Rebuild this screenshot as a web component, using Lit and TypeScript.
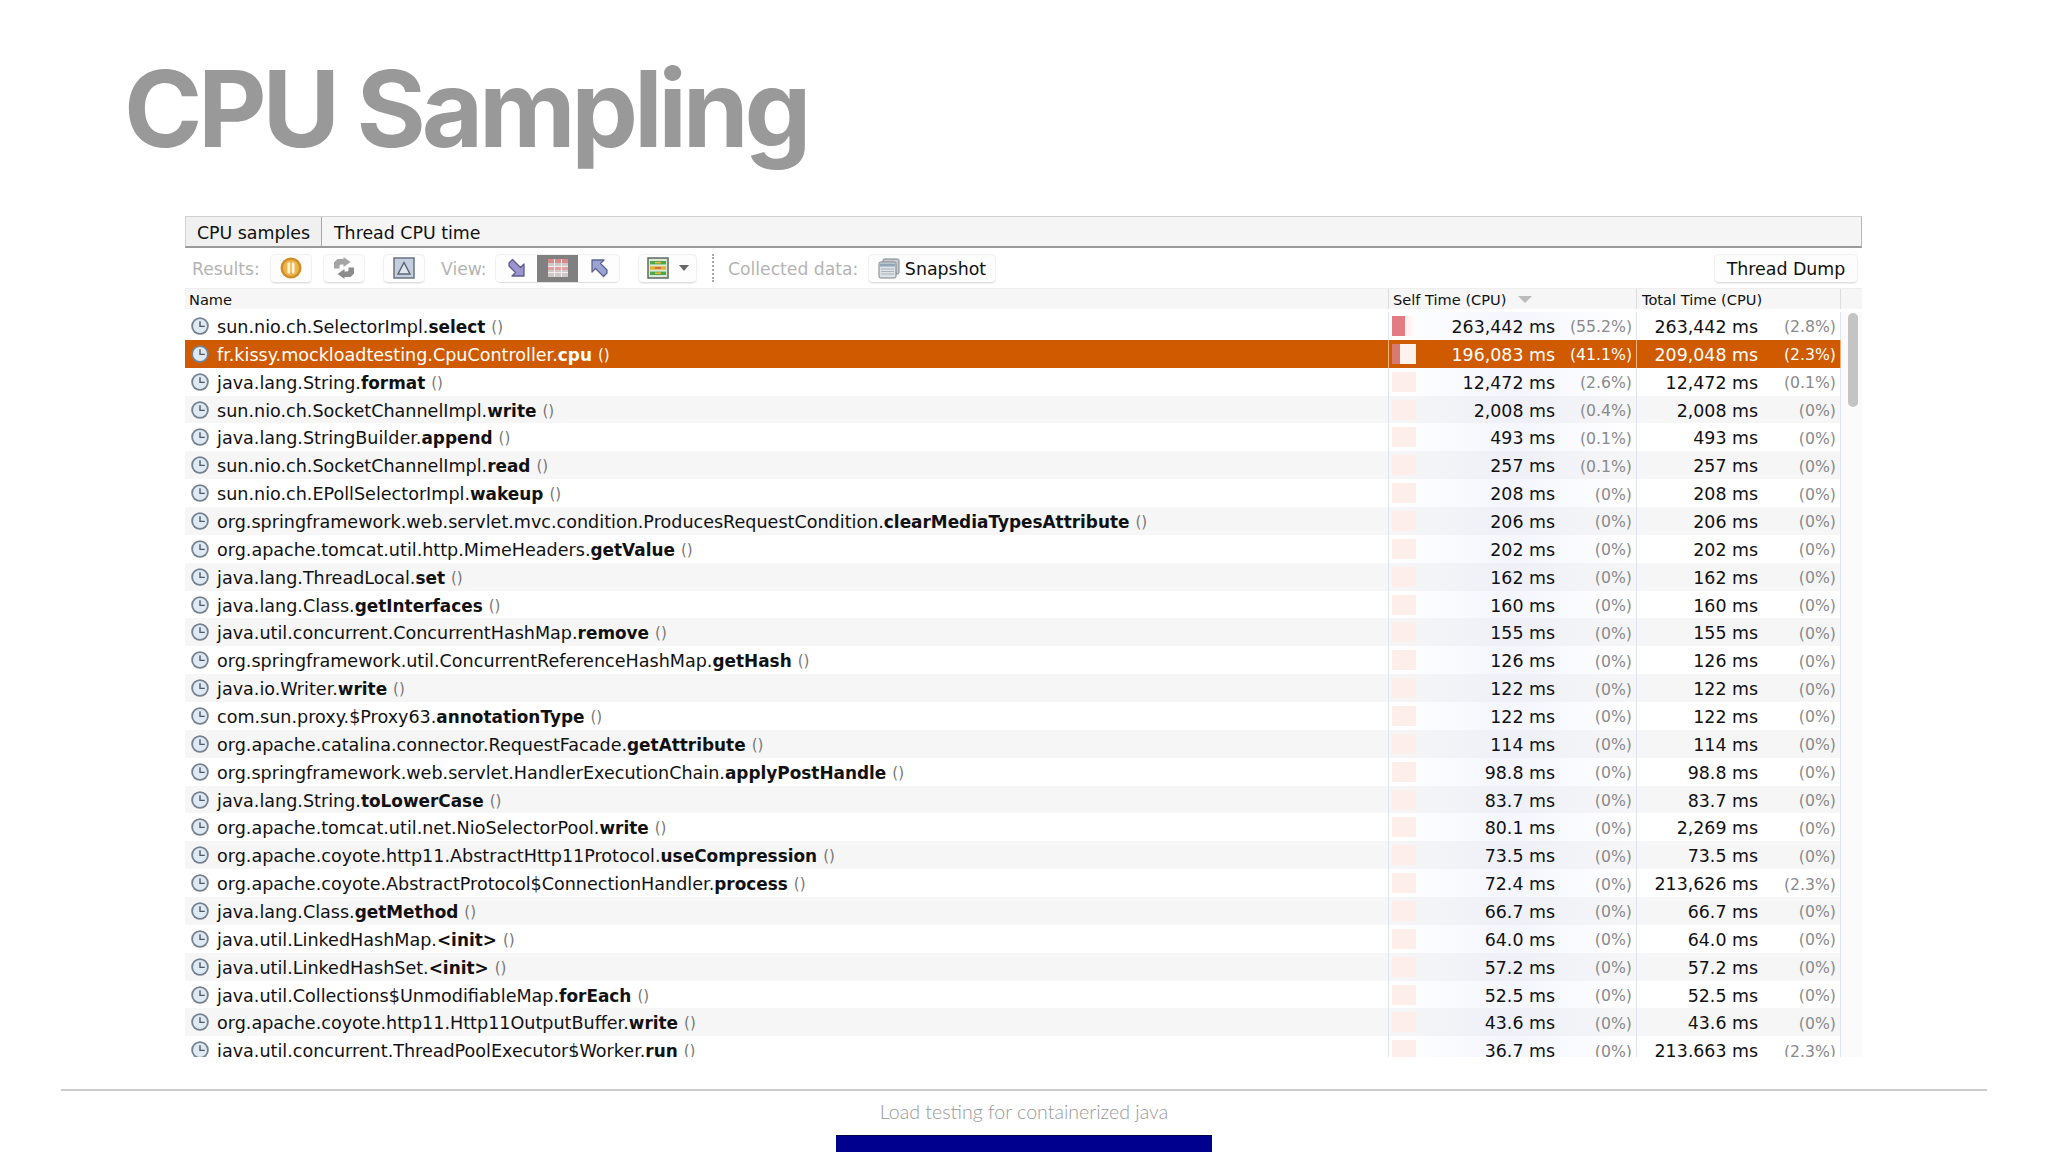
import { LitElement, html, css, svg } from "lit";
import { customElement } from "lit/decorators.js";

type Row = [string, string, string, string, string, string];
const ROWS: Row[] = [
  ["sun.nio.ch.SelectorImpl.", "select", "263,442 ms", "(55.2%)", "263,442 ms", "(2.8%)"],
  ["fr.kissy.mockloadtesting.CpuController.", "cpu", "196,083 ms", "(41.1%)", "209,048 ms", "(2.3%)"],
  ["java.lang.String.", "format", "12,472 ms", "(2.6%)", "12,472 ms", "(0.1%)"],
  ["sun.nio.ch.SocketChannelImpl.", "write", "2,008 ms", "(0.4%)", "2,008 ms", "(0%)"],
  ["java.lang.StringBuilder.", "append", "493 ms", "(0.1%)", "493 ms", "(0%)"],
  ["sun.nio.ch.SocketChannelImpl.", "read", "257 ms", "(0.1%)", "257 ms", "(0%)"],
  ["sun.nio.ch.EPollSelectorImpl.", "wakeup", "208 ms", "(0%)", "208 ms", "(0%)"],
  ["org.springframework.web.servlet.mvc.condition.ProducesRequestCondition.", "clearMediaTypesAttribute", "206 ms", "(0%)", "206 ms", "(0%)"],
  ["org.apache.tomcat.util.http.MimeHeaders.", "getValue", "202 ms", "(0%)", "202 ms", "(0%)"],
  ["java.lang.ThreadLocal.", "set", "162 ms", "(0%)", "162 ms", "(0%)"],
  ["java.lang.Class.", "getInterfaces", "160 ms", "(0%)", "160 ms", "(0%)"],
  ["java.util.concurrent.ConcurrentHashMap.", "remove", "155 ms", "(0%)", "155 ms", "(0%)"],
  ["org.springframework.util.ConcurrentReferenceHashMap.", "getHash", "126 ms", "(0%)", "126 ms", "(0%)"],
  ["java.io.Writer.", "write", "122 ms", "(0%)", "122 ms", "(0%)"],
  ["com.sun.proxy.$Proxy63.", "annotationType", "122 ms", "(0%)", "122 ms", "(0%)"],
  ["org.apache.catalina.connector.RequestFacade.", "getAttribute", "114 ms", "(0%)", "114 ms", "(0%)"],
  ["org.springframework.web.servlet.HandlerExecutionChain.", "applyPostHandle", "98.8 ms", "(0%)", "98.8 ms", "(0%)"],
  ["java.lang.String.", "toLowerCase", "83.7 ms", "(0%)", "83.7 ms", "(0%)"],
  ["org.apache.tomcat.util.net.NioSelectorPool.", "write", "80.1 ms", "(0%)", "2,269 ms", "(0%)"],
  ["org.apache.coyote.http11.AbstractHttp11Protocol.", "useCompression", "73.5 ms", "(0%)", "73.5 ms", "(0%)"],
  ["org.apache.coyote.AbstractProtocol$ConnectionHandler.", "process", "72.4 ms", "(0%)", "213,626 ms", "(2.3%)"],
  ["java.lang.Class.", "getMethod", "66.7 ms", "(0%)", "66.7 ms", "(0%)"],
  ["java.util.LinkedHashMap.", "<init>", "64.0 ms", "(0%)", "64.0 ms", "(0%)"],
  ["java.util.LinkedHashSet.", "<init>", "57.2 ms", "(0%)", "57.2 ms", "(0%)"],
  ["java.util.Collections$UnmodifiableMap.", "forEach", "52.5 ms", "(0%)", "52.5 ms", "(0%)"],
  ["org.apache.coyote.http11.Http11OutputBuffer.", "write", "43.6 ms", "(0%)", "43.6 ms", "(0%)"],
  ["java.util.concurrent.ThreadPoolExecutor$Worker.", "run", "36.7 ms", "(0%)", "213,663 ms", "(2.3%)"],
];

const clock = html`<svg class="clock" viewBox="0 0 18 18" width="18" height="18">
  <circle cx="9" cy="9" r="8.800" fill="#76828e"/><circle cx="9" cy="9" r="7" fill="#dfe9f3"/>
  <path d="M9 4.200V9.400H13.800" fill="none" stroke="#4f5a64" stroke-width="1.400"/></svg>`;

const pauseIcon = svg`<circle cx="11" cy="11" r="10.500" fill="#d08e28"/><circle cx="11" cy="11" r="8" fill="#f0b34c"/>
  <rect x="7.400" y="5.500" width="2.800" height="11" rx="1" fill="#fff3d8"/><rect x="11.800" y="5.500" width="2.800" height="11" rx="1" fill="#fff3d8"/>`;
const refreshIcon = svg`<path d="M1 11.500V5.500L4.500 2H10.500V0L17.500 5L10.500 10V7.500H7.500L6.500 8.500V11.500Z" fill="#a4a4a4"/>
  <path d="M21 10.500V16.500L17.500 20H11.500V22L4.500 17L11.500 12V14.500H14.500L15.500 13.500V10.500Z" fill="#8c8c8c"/>`;
const deltaIcon = svg`<rect x="1" y="1" width="20" height="20" fill="#c3cfe0" stroke="#68727f" stroke-width="1.500"/>
  <path d="M11 5.500L17 17H5Z" fill="#dfe6ef" stroke="#5d6672" stroke-width="1.500"/>`;
const downArrow = svg`<path d="M3 6L6.500 2.500L14.500 10.500L18 7V19H6L9.500 15.500L3 9Z" fill="#9a94cf" stroke="#5e5a8c" stroke-width="1.300" stroke-linejoin="round"/>`;
const upArrow = svg`<path d="M19 16L15.500 19.500L7.500 11.500L4 15V3H16L12.500 6.500L19 13Z" fill="#9aa4d4" stroke="#5c648e" stroke-width="1.300" stroke-linejoin="round"/>`;
const gridIcon = svg`<rect x="1" y="2" width="20" height="18" fill="#cfc8c8"/>
  <rect x="1" y="2" width="20" height="4" fill="#d88a8a"/><rect x="1" y="10" width="20" height="3" fill="#e3a0a0"/>
  <path d="M7.500 2V20M14.500 2V20M1 9.500H21M1 15.500H21" stroke="#f2eeee" stroke-width="1"/>`;
const comboIcon = svg`<rect x="1" y="1" width="20" height="20" fill="#dce8d8" stroke="#5d6a60" stroke-width="1.500"/>
  <rect x="3" y="4" width="16" height="3.400" fill="#4da64a"/><rect x="8" y="4.800" width="6" height="1.600" fill="#e9b83c"/>
  <rect x="3" y="9.300" width="16" height="3.400" fill="#e3b23a"/><rect x="8" y="10.100" width="6" height="1.600" fill="#d0603a"/>
  <rect x="3" y="14.600" width="16" height="3.400" fill="#4da64a"/><rect x="8" y="15.400" width="6" height="1.600" fill="#e9b83c"/>`;
const snapIcon = svg`<rect x="5" y="1" width="16" height="15" rx="1.500" fill="#c9ccd0" stroke="#7c8288"/>
  <rect x="1" y="4" width="17" height="16" rx="1.500" fill="#dde2e6" stroke="#7c8288"/>
  <rect x="2" y="5.500" width="15" height="3" fill="#8fa6ba"/>
  <path d="M3 11H16M3 13.500H16M3 16H16" stroke="#a7b4bf" stroke-width="1"/>`;
const icon = (s: unknown) => html`<svg class="ico" viewBox="0 0 22 22" width="22" height="22">${s}</svg>`;

@customElement("app-root")
export class AppRoot extends LitElement {
  static styles = css`
    :host { display: block; width: 2048px; height: 1152px; overflow: hidden; background: #fff; font-family: "DejaVu Sans", sans-serif; color: #111; }
    .title { margin: 0; height: 216px; box-sizing: border-box; padding: 51px 0 0 124px; font: 700 106px/116px Inter, sans-serif; letter-spacing: -4.300px; color: #999; }
    .panel { margin-left: 185px; width: 1677px; }
    .tabs { display: flex; height: 32px; box-sizing: border-box; background: #f5f5f5; border: 1px solid #d0d0d0; border-bottom: 2px solid #9a9a9a; border-right-color: #b8b8b8; }
    .tab { display: flex; align-items: center; font-size: 17.400px; padding: 2px 12px 0; white-space: nowrap; }
    .tab.on { width: 136px; box-sizing: border-box; background: #f0f0f0; border-right: 1px solid #a8a8a8; justify-content: center; padding: 2px 0 0; }
    .tab.off { padding-left: 12px; }
    .toolbar { display: flex; align-items: center; height: 40px; padding-left: 7px; font-size: 17.400px; }
    .lbl { color: #b4b4b4; white-space: nowrap; padding-top: 2px; font-size: 17.200px; }
    .btn { display: flex; align-items: center; justify-content: center; height: 29px; box-sizing: border-box; border-radius: 5px; background: #fdfdfd; border: 1px solid #f0f0f0; border-bottom-color: #e0e0e0; box-shadow: 0 1px 1px #eee; }
    .btn.w42 { width: 42px; }
    .results { width: 69px; }
    .gap1 { margin-left: 9px; }
    .gap2 { margin-left: 11px; }
    .gap3 { margin-left: 18px; }
    .view { margin-left: 16px; width: 44px; }
    .group { margin-left: 10px; width: 125px; display: flex; height: 29px; box-sizing: border-box; border-radius: 5px; border: 1px solid #f0f0f0; border-bottom-color: #e0e0e0; background: #fdfdfd; overflow: hidden; }
    .group > span { flex: 1; display: flex; align-items: center; justify-content: center; }
    .group > span.sel { background: #808080; }
    .combo { margin-left: 18px; width: 59px; gap: 10px; }
    .caret { width: 0; height: 0; border-left: 5px solid transparent; border-right: 5px solid transparent; border-top: 6px solid #666; }
    .sep { margin-left: 15px; height: 28px; border-left: 2px dotted #a8a8a8; }
    .coll { margin-left: 14px; width: 131px; }
    .snap { margin-left: 9px; width: 128px; gap: 5px; color: #111; padding-top: 1px; }
    .dump { margin-left: auto; margin-right: 4px; width: 144px; padding-top: 1px; }
    .head { display: flex; height: 21px; margin-bottom: 3px; background: #f6f6f7; font-size: 14.600px; align-items: center; border-top: 1px solid #eee; box-sizing: border-box; }
    .head .n { width: 1203px; padding-left: 4px; box-sizing: border-box; }
    .head .s { width: 248px; box-sizing: border-box; padding-left: 4px; border-left: 1px solid #ddd; display: flex; align-items: center; gap: 11px; background: none; }
    .head .t { width: 205px; box-sizing: border-box; padding-left: 5px; border-left: 1px solid #ddd; border-right: 1px solid #ddd; justify-content: flex-start; }
    .sort { width: 0; height: 0; border-left: 7px solid transparent; border-right: 7px solid transparent; border-top: 7px solid #bbb; }
    .body { display: flex; height: 745px; overflow: hidden; }
    .rows { width: 1656px; flex: none; }
    .row { display: flex; height: 27.870px; align-items: center; font-size: 17.400px; white-space: nowrap; }
    .row.alt { background: #f6f6f7; }
    .row.sel { background: #d05a00; color: #fff; }
    .n { width: 1203px; flex: none; display: flex; align-items: center; height: 100%; padding-left: 6px; box-sizing: border-box; }
    .clock { margin-right: 8px; flex: none; }
    .name { padding-top: 2px; font-size: 17.570px; }
    .name b { font-weight: 700; font-size: 16.900px; }
    .paren { color: #777; margin-left: 6px; font-size: 15px; padding-top: 2px; }
    .sel .paren { color: #fff; }
    .s, .t { flex: none; height: 100%; box-sizing: border-box; display: flex; align-items: center; }
    .s { width: 248px; border-left: 1px solid #dfe2f4; background: linear-gradient(90deg, transparent, rgba(225, 229, 250, 0.350) 50%, transparent); padding-left: 3px; }
    .sel .s, .sel .t { background: none; border-color: #f0b080; }
    .t { width: 205px; border-left: 1px solid #dfe2f4; border-right: 1px solid #dfe2f4; justify-content: flex-end; }
    .bar { width: 24px; height: 20px; flex: none; background: #fdeeea; display: flex; }
    .bar i { display: block; background: #e37c82; }
    .bar.first { background: linear-gradient(90deg, #fdf0f0, #fdf0f0 70%, #fff); }
    .bar.sel2 { background: #fdf2ee; }
    .bar.sel2 i { background: #d87a70; }
    .val { margin-left: auto; padding-top: 2px; }
    .pct { color: #8a8a8a; text-align: right; font-size: 15.700px; padding-top: 2px; }
    .sel .pct { color: #fff; }
    .s .pct { width: 77px; margin-right: 4px; }
    .t .pct { width: 78px; margin-right: 4px; }
    .gutter { width: 21px; flex: none; background: #fbfbfb; padding: 1px 4px 0 7px; box-sizing: border-box; }
    .thumb { height: 94px; border-radius: 5px; background: #c4c4c4; }
    .foot { margin: 32px 61px 0 61px; border-top: 2px solid #ccc; text-align: center; font: 300 19.600px/22px Lato, sans-serif; color: #999; padding-top: 10px; height: 46px; box-sizing: border-box; }
    .blue { width: 376px; height: 17px; margin: 0 auto; background: #00008f; border-top: 1px solid #000040; box-sizing: border-box; }
  `;

  render() {
    return html`
      <h1 class="title">CPU Sampling</h1>
      <div class="panel">
        <div class="tabs"><div class="tab on">CPU samples</div><div class="tab off">Thread CPU time</div></div>
        <div class="toolbar">
          <span class="lbl results">Results:</span>
          <span class="btn w42 gap1">${icon(pauseIcon)}</span>
          <span class="btn w42 gap2">${icon(refreshIcon)}</span>
          <span class="btn w42 gap3">${icon(deltaIcon)}</span>
          <span class="lbl view">View:</span>
          <span class="group"><span>${icon(downArrow)}</span><span class="sel">${icon(gridIcon)}</span><span>${icon(upArrow)}</span></span>
          <span class="btn combo">${icon(comboIcon)}<i class="caret"></i></span>
          <span class="sep"></span>
          <span class="lbl coll">Collected data:</span>
          <span class="btn snap">${icon(snapIcon)}Snapshot</span>
          <span class="btn dump">Thread Dump</span>
        </div>
        <div class="head">
          <span class="n">Name</span>
          <span class="s">Self Time (CPU) <i class="sort"></i></span>
          <span class="t">Total Time (CPU)</span>
        </div>
        <div class="body">
          <div class="rows">
            ${ROWS.map((r, i) => {
              const sel = i === 1;
              const cls = sel ? "row sel" : i % 2 === 1 ? "row alt" : "row";
              const w = i === 0 ? 13 : sel ? 8 : 0;
              return html`<div class=${cls}>
                <div class="n">${clock}<span class="name">${r[0]}<b>${r[1]}</b></span><span class="paren">()</span></div>
                <div class="s"><span class="bar ${i === 0 ? "first" : sel ? "sel2" : ""}"><i style="width:${w}px"></i></span><span class="val">${r[2]}</span><span class="pct">${r[3]}</span></div>
                <div class="t"><span class="val">${r[4]}</span><span class="pct">${r[5]}</span></div>
              </div>`;
            })}
          </div>
          <div class="gutter"><div class="thumb"></div></div>
        </div>
      </div>
      <div class="foot">Load testing for containerized java</div>
      <div class="blue"></div>
    `;
  }
}
